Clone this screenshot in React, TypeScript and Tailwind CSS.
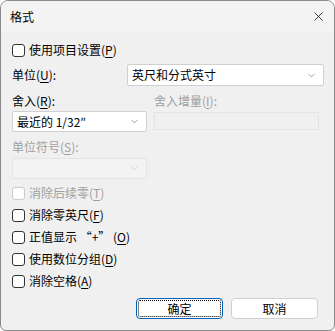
import { ChevronDown, X } from 'lucide-react'

const FONT = { fontFamily: '"Noto Sans CJK SC", "Liberation Sans", sans-serif' }

// label text with mnemonic letter underlined, e.g. ['使用项目设置(', 'P', ')']
function Mn({ pre, k, post = ')' }: { pre: string; k: string; post?: string }) {
  return (
    <span>
      {pre}
      <span className="underline underline-offset-2">{k}</span>
      {post}
    </span>
  )
}

function Check({ pre, k, disabled }: { pre: string; k: string; disabled?: boolean }) {
  return (
    <label className={`flex items-center gap-[4px] h-[22px] text-[12px] ${disabled ? 'text-[#a0a0a0]' : 'text-black'}`}>
      <span
        className={`w-[13px] h-[13px] rounded-[3px] border bg-white ${disabled ? 'border-[#cccccc]' : 'border-[#333]'}`}
      />
      <Mn pre={pre} k={k} />
    </label>
  )
}

function Select({ value, className, disabled }: { value: string; className: string; disabled?: boolean }) {
  return (
    <div
      className={`flex items-center justify-between h-[21px] pl-[4px] pr-[6px] rounded-[2px] border text-[12px] ${
        disabled ? 'bg-[#f3f3f3] border-[#e4e4e4] text-[#a0a0a0]' : 'bg-white border-[#d0d0d0] text-black'
      } ${className}`}
    >
      <span>{value}</span>
      <ChevronDown size={11} strokeWidth={1.3} className={disabled ? 'text-[#c0c0c0]' : 'text-[#606060]'} />
    </div>
  )
}

export default function App() {
  return (
    <div className="w-[335px] h-[331px] bg-white" style={FONT}>
      <div className="w-full h-full flex flex-col rounded-t-[8px] rounded-b-[6px] border border-[#8a8a8a] bg-[#f0f0f0] overflow-hidden">
        <div className="flex items-center justify-between h-[31px] pl-[9px] pr-[8px] bg-[#f3f3f3] text-[12px] text-black">
          <span>格式</span>
          <X size={15} strokeWidth={1.2} />
        </div>
        <div className="flex flex-col px-[11px] pt-[7px]">
          <Check pre="使用项目设置(" k="P" />
          <div className="flex items-center mt-[3px] text-[12px]">
            <span className="w-[115px]">
              <Mn pre="单位(" k="U" post="):" />
            </span>
            <Select value="英尺和分式英寸" className="flex-1 mr-[-1px] h-[22px]" />
          </div>
          <div className="grid grid-cols-[135px_1fr] gap-x-[7px] mt-[5px] text-[12px]">
            <span className="h-[20px] leading-[20px]">
              <Mn pre="舍入(" k="R" post="):" />
            </span>
            <span className="h-[20px] leading-[20px] text-[#a0a0a0]">
              <Mn pre="舍入增量(" k="I" post="):" />
            </span>
            <Select value="最近的 1/32″" className="" />
            <div className="h-[18px] mt-[1px] mr-[4px] border border-[#e4e4e4] bg-[#f0f0f0]" />
          </div>
          <span className="h-[20px] leading-[20px] mt-[5px] text-[12px] text-[#a0a0a0]">
            <Mn pre="单位符号(" k="S" post="):" />
          </span>
          <Select value="" className="w-[135px] mt-[1px]" disabled />
          <div className="flex flex-col mt-[3px]">
            <Check pre="消除后续零(" k="T" disabled />
            <Check pre="消除零英尺(" k="F" />
            <Check pre="正值显示 “+” (" k="O" />
            <Check pre="使用数位分组(" k="D" />
            <Check pre="消除空格(" k="A" />
          </div>
          <div className="flex justify-end gap-[8px] mt-[6px] mr-[5px] text-[12px]">
            <button className="w-[87px] h-[21px] rounded-[4px] border border-[#005fb8] bg-white outline-1 outline-dotted outline-black -outline-offset-3">
              确定
            </button>
            <button className="w-[87px] h-[21px] rounded-[4px] border border-[#d0d0d0] bg-white">取消</button>
          </div>
        </div>
      </div>
    </div>
  )
}
